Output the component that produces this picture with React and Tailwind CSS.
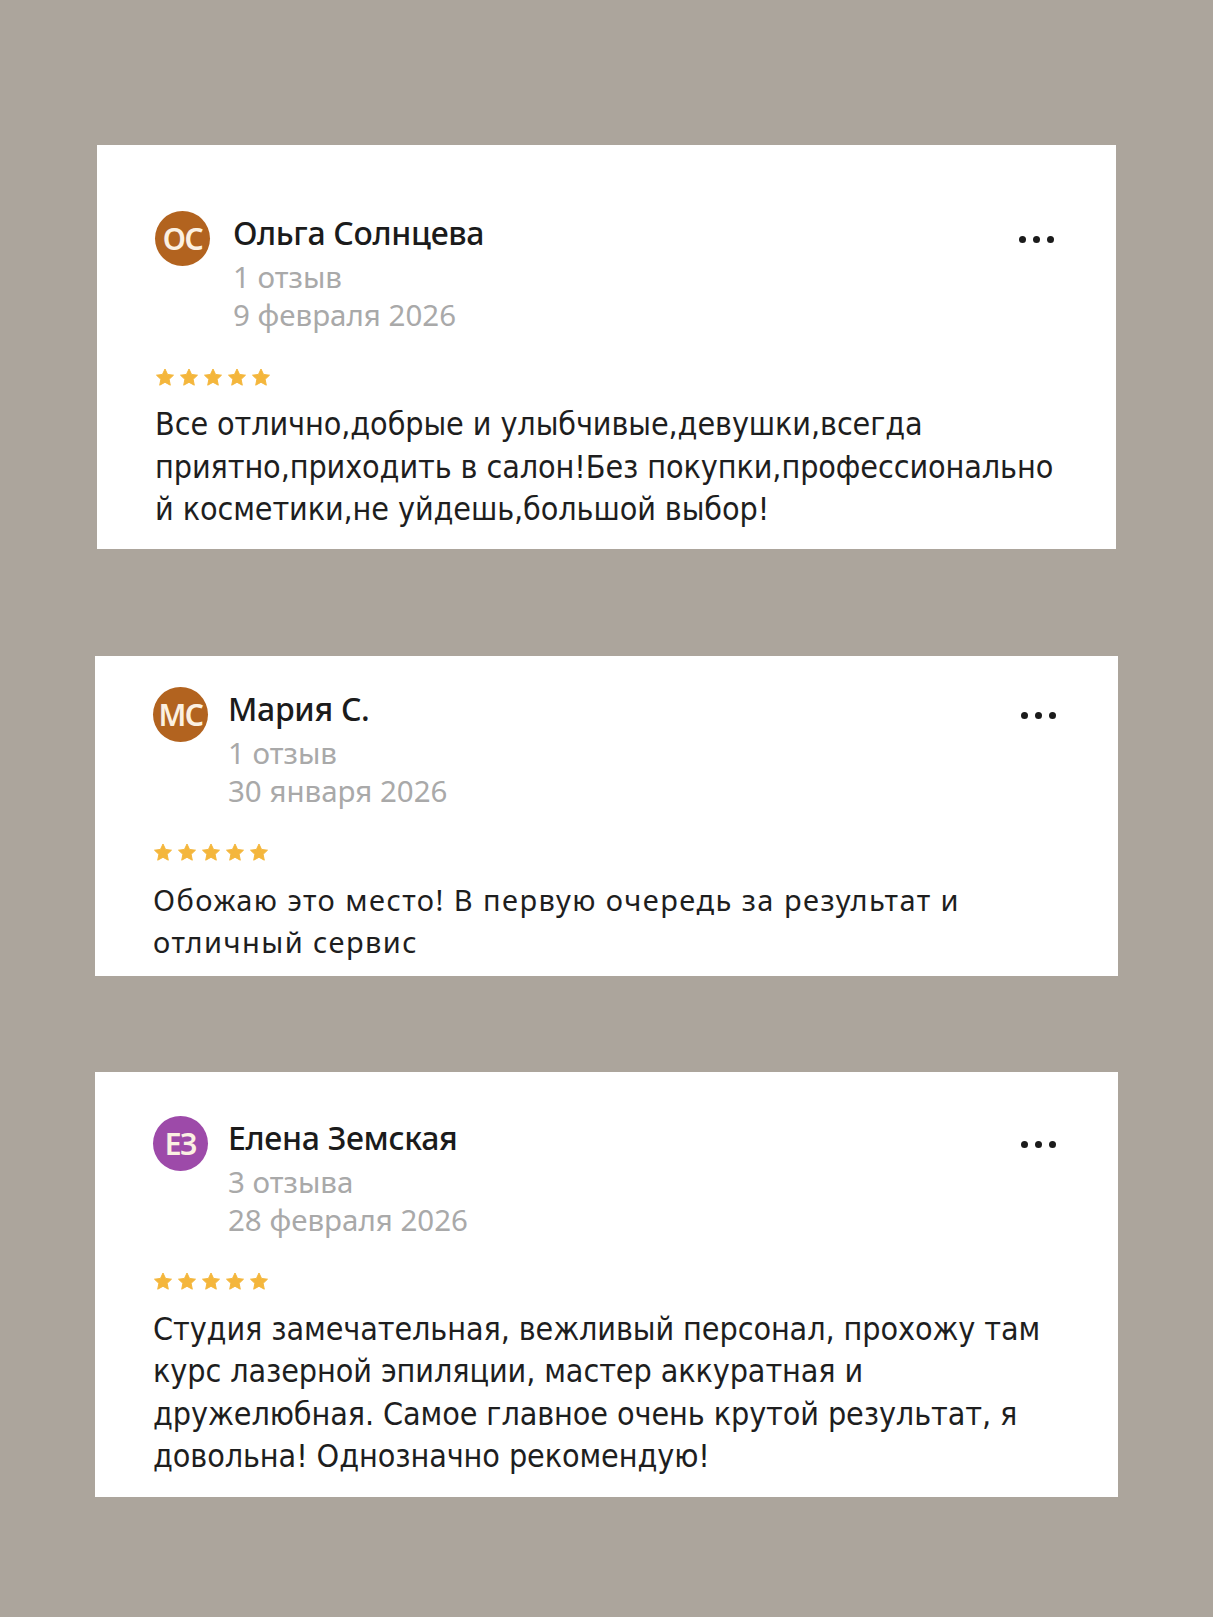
import React from 'react';

const reviews = [
  {
    initials: 'ОС',
    avatar: 'bg-[#b2631f]',
    name: 'Ольга Солнцева',
    count: '1 отзыв',
    date: '9 февраля 2026',
    condensed: true,
    gap: 'ml-[23px]',
    card: 'ml-[97px] w-[1019px] pt-[66px] pb-[18px]',
    lines: [
      'Все отлично,добрые и улыбчивые,девушки,всегда',
      'приятно,приходить в салон!Без покупки,профессионально',
      'й косметики,не уйдешь,большой выбор!',
    ],
  },
  {
    initials: 'МС',
    avatar: 'bg-[#b2631f]',
    name: 'Мария С.',
    count: '1 отзыв',
    date: '30 января 2026',
    condensed: false,
    gap: 'ml-[20px]',
    card: 'ml-[95px] w-[1023px] mt-[107px] pt-[31px] pb-[13px]',
    lines: ['Обожаю это место! В первую очередь за результат и', 'отличный сервис'],
  },
  {
    initials: 'ЕЗ',
    avatar: 'bg-[#9d4aa9]',
    name: 'Елена Земская',
    count: '3 отзыва',
    date: '28 февраля 2026',
    condensed: true,
    gap: 'ml-[20px]',
    card: 'ml-[95px] w-[1023px] mt-[96px] pt-[44px] pb-[19px]',
    lines: [
      'Студия замечательная, вежливый персонал, прохожу там',
      'курс лазерной эпиляции, мастер аккуратная и',
      'дружелюбная. Самое главное очень крутой результат, я',
      'довольна! Однозначно рекомендую!',
    ],
  },
];

const Star = () => (
  <svg width="20" height="19" viewBox="0 0 24 23">
    <path
      d="M12 1.2l3.1 6.6 7.2.9-5.3 5 1.4 7.1L12 17.3l-6.4 3.5 1.4-7.1-5.3-5 7.2-.9z"
      fill="#f4b63c"
      stroke="#f4b63c"
      strokeWidth="1.2"
      strokeLinejoin="round"
    />
  </svg>
);

const ReviewCard = ({ review }) => (
  <div className={`bg-white pl-[58px] pr-[62px] ${review.card}`}>
    <div className="flex items-start">
      <div
        className={`w-[55px] h-[55px] rounded-full flex items-center justify-center shrink-0 text-[#fbf0e2] text-[30px] font-semibold tracking-[-1.5px] ${review.avatar}`}
      >
        {review.initials}
      </div>
      <div className={`flex-1 ${review.gap}`}>
        <div className="text-[32px] leading-[44px] font-medium text-[#1b1b1b] tracking-[-0.3px]">{review.name}</div>
        <div className="text-[29.5px] leading-[44px] text-[#a9a9a9]">{review.count}</div>
        <div className="text-[29.5px] leading-[32px] text-[#a9a9a9]">{review.date}</div>
      </div>
      <div className="flex gap-[7px] mt-[25px]">
        <span className="w-[7px] h-[7px] rounded-full bg-[#1b1b1b]" />
        <span className="w-[7px] h-[7px] rounded-full bg-[#1b1b1b]" />
        <span className="w-[7px] h-[7px] rounded-full bg-[#1b1b1b]" />
      </div>
    </div>
    <div className="flex gap-[4px] mt-[37px] h-[18px] items-center">
      <Star />
      <Star />
      <Star />
      <Star />
      <Star />
    </div>
    <div
      className={`mt-[17px] text-[#1e1e1e] whitespace-nowrap ${
        review.condensed
          ? "font-['DejaVu_Sans_Condensed','Noto_Sans',sans-serif] font-stretch-condensed text-[32px] leading-[42.5px] tracking-[-0.1px]"
          : 'text-[29px] leading-[42px] tracking-[1.45px]'
      }`}
    >
      {review.lines.map((line, i) => (
        <div key={i}>{line}</div>
      ))}
    </div>
  </div>
);

export default function App() {
  return (
    <div className="min-h-[1617px] bg-[#aca59c] pt-[145px] font-['Noto_Sans',sans-serif]">
      {reviews.map((r, i) => (
        <ReviewCard key={i} review={r} />
      ))}
    </div>
  );
}
